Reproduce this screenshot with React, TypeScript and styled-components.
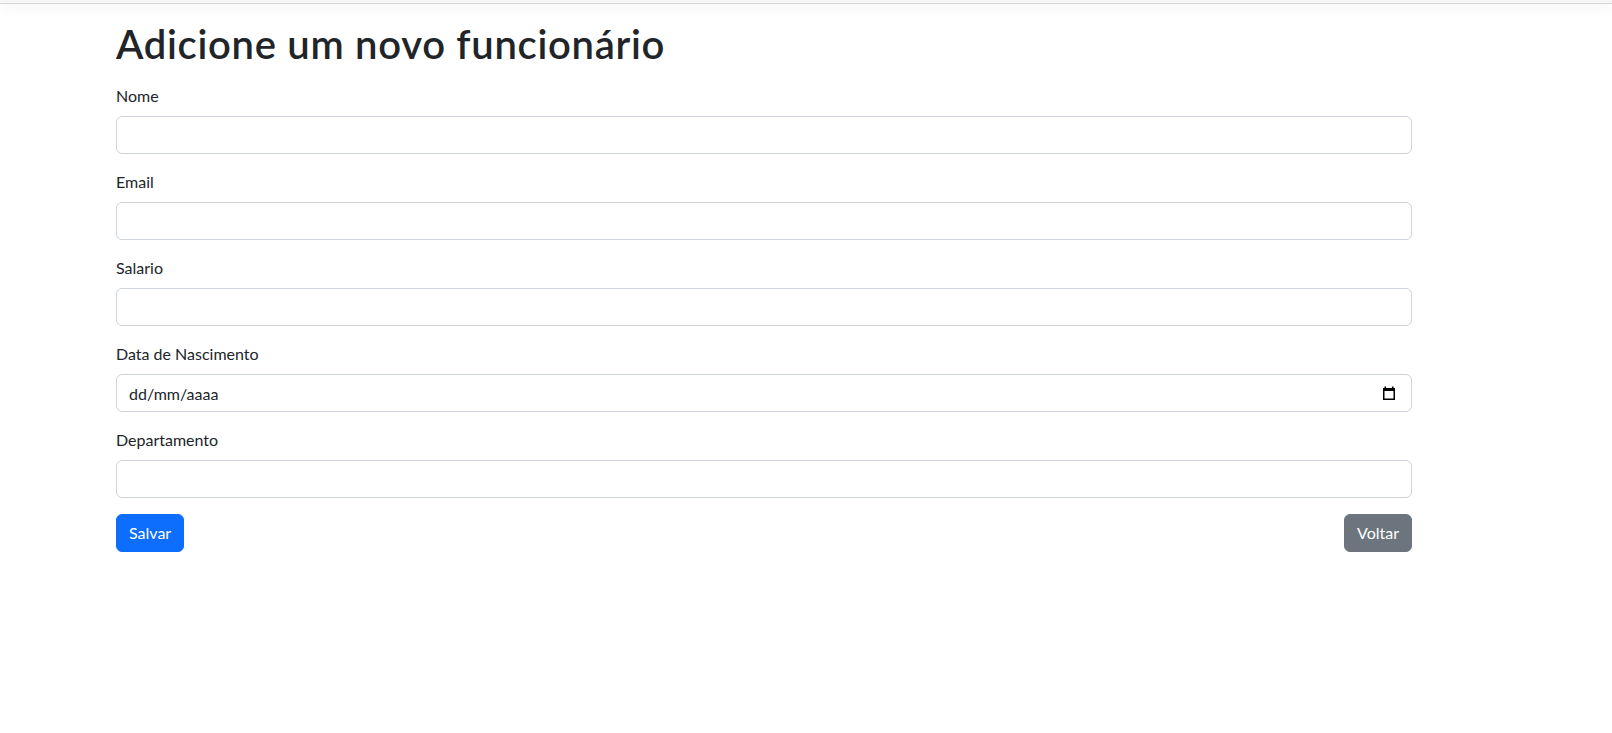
import React from "react";
import styled, { createGlobalStyle } from "styled-components";

const GlobalStyle = createGlobalStyle`
  *, *::before, *::after { box-sizing: border-box; }
  body {
    margin: 0;
    background: #ffffff;
    color: #212529;
    font-family: Lato, "Open Sans", "Noto Sans", sans-serif;
    font-size: 16px;
    line-height: 1.5;
  }
`;

const TopBar = styled.nav`
  height: 4px;
  background: #f6f6f6;
  border-bottom: 1px solid #d6d6d6;
  box-shadow: 0 4px 12px rgba(0, 0, 0, 0.08);
`;

const Container = styled.main`
  width: 1320px;
  margin-left: 104px;
  padding: 0 12px;
`;

const Title = styled.h1`
  margin: 16px 0 16px;
  font-size: 40px;
  font-weight: 600;
  line-height: 1.2;
  letter-spacing: 0.7px;
  color: #212529;
`;

const Form = styled.form`
  display: flex;
  flex-direction: column;
`;

const Field = styled.div`
  margin-bottom: 16px;
`;

const Label = styled.label`
  display: inline-block;
  margin-bottom: 8px;
  font-size: 16px;
  line-height: 24px;
`;

const Input = styled.input`
  display: block;
  width: 100%;
  height: 38px;
  padding: 6px 12px;
  font-family: inherit;
  font-size: 16px;
  line-height: 24px;
  color: #212529;
  background: #fff;
  border: 1px solid #ced4da;
  border-radius: 6px;
  outline: none;
  &::placeholder { color: #212529; opacity: 1; }
`;

const DateWrap = styled.div`
  position: relative;
`;

const CalendarButton = styled.span`
  position: absolute;
  right: 16px;
  top: 12px;
  width: 14px;
  height: 14px;
  display: flex;
`;

const Actions = styled.div`
  display: flex;
  justify-content: space-between;
  align-items: center;
`;

const Button = styled.button<{ $variant: "primary" | "secondary" }>`
  height: 38px;
  padding: 6px 12px;
  font-family: inherit;
  font-size: 16px;
  line-height: 24px;
  color: #fff;
  border: 1px solid ${(p) => (p.$variant === "primary" ? "#0d6efd" : "#6c757d")};
  background: ${(p) => (p.$variant === "primary" ? "#0d6efd" : "#6c757d")};
  border-radius: 6px;
  cursor: pointer;
`;

const CalendarIcon = () => (
  <svg width="14" height="14" viewBox="0 0 14 14">
    <rect x="2.5" y="0.5" width="1.6" height="2.5" fill="#000" />
    <rect x="9.9" y="0.5" width="1.6" height="2.5" fill="#000" />
    <rect x="1" y="2" width="12" height="3" fill="#000" />
    <rect x="1.75" y="2.75" width="10.5" height="10.5" fill="none" stroke="#000" strokeWidth="1.5" />
  </svg>
);

const fields = ["Nome", "Email", "Salario"];

export default function App() {
  return (
    <>
      <GlobalStyle />
      <TopBar />
      <Container>
        <Title>Adicione um novo funcionário</Title>
        <Form onSubmit={(e) => e.preventDefault()}>
          {fields.map((f) => (
            <Field key={f}>
              <Label>{f}</Label>
              <Input type="text" />
            </Field>
          ))}
          <Field>
            <Label>Data de Nascimento</Label>
            <DateWrap>
              <Input type="text" placeholder="dd/mm/aaaa" />
              <CalendarButton>
                <CalendarIcon />
              </CalendarButton>
            </DateWrap>
          </Field>
          <Field>
            <Label>Departamento</Label>
            <Input type="text" />
          </Field>
          <Actions>
            <Button type="submit" $variant="primary">Salvar</Button>
            <Button type="button" $variant="secondary">Voltar</Button>
          </Actions>
        </Form>
      </Container>
    </>
  );
}
